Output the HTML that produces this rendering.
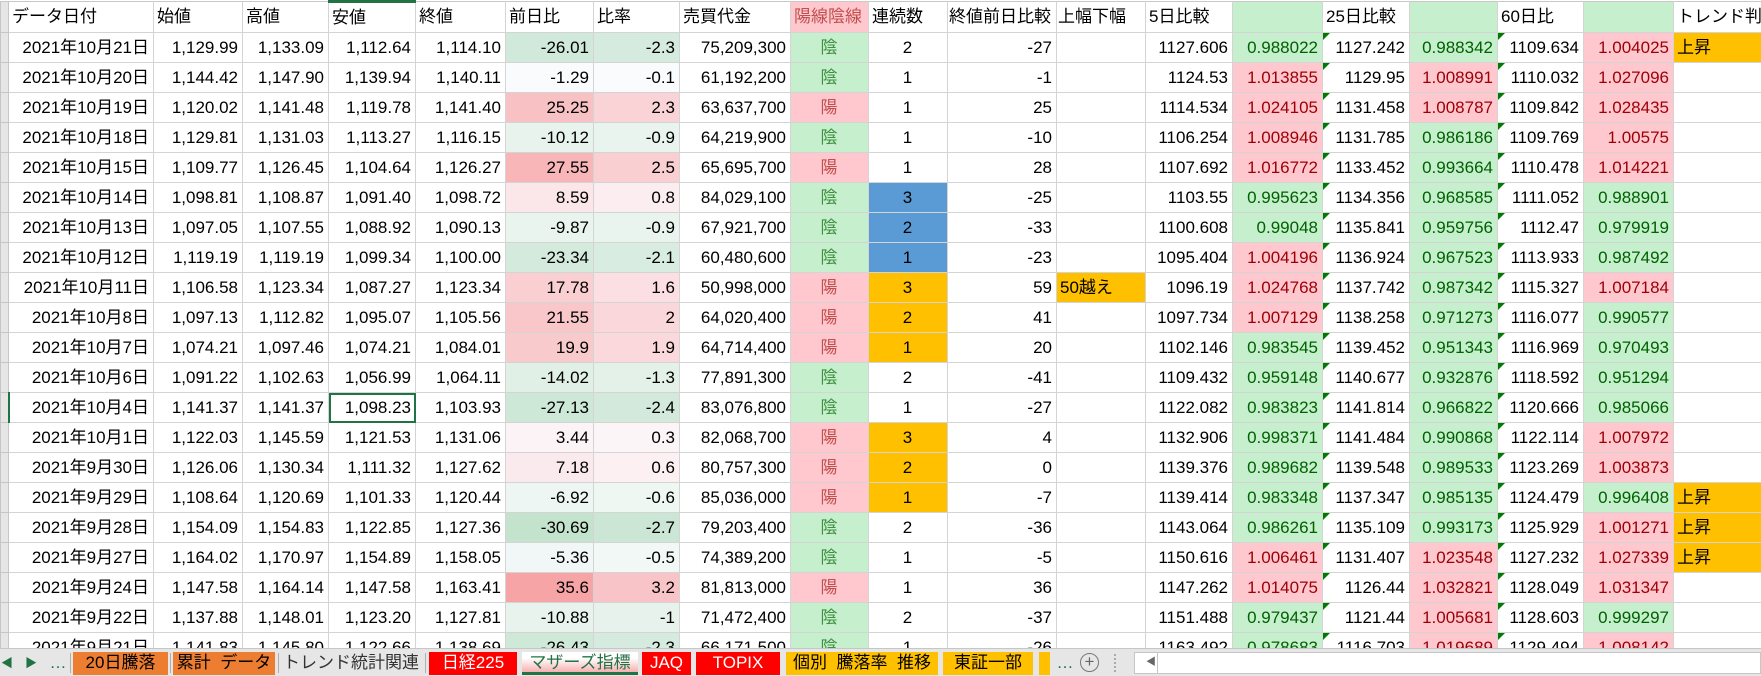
<!DOCTYPE html>
<html><head><meta charset="utf-8"><style>
*{margin:0;padding:0;box-sizing:border-box}
body{width:1761px;height:676px;overflow:hidden;background:#fff;font-family:"Liberation Sans","Noto Sans CJK JP",sans-serif;font-size:17px;color:#000;position:relative}
#grid{position:absolute;left:0;top:0;width:1761px;height:648px;overflow:hidden}
table{border-collapse:collapse;table-layout:fixed;width:1761px}
td{border:1px solid #d4d4d4;height:30px;padding:0 4px 0 3px;white-space:nowrap;overflow:hidden;text-align:right;position:relative;line-height:28px}
tr.h td{height:31px;text-align:left;border-top:1px solid #c8c8c8}
td.rh{background:#e6e6e6;padding:0;border-color:#c6c6c6}
.c{text-align:center}
.l{text-align:left}
.y{background:#ffc7ce;color:#c0504d}
.n{background:#c6efce;color:#3f8f3f}
.gr{background:#c6efce;color:#006100}
.rd{background:#ffc7ce;color:#9c0006}
.bl{background:#5b9bd5}
.or{background:#ffc000}
.t:before{content:"";position:absolute;left:0;top:0;border-top:7px solid #007a00;border-right:7px solid transparent}
#tabs{position:absolute;left:0;top:648px;width:1761px;height:28px;background:#e6e6e6;border-top:1px solid #c6c6c6}
.tab{position:absolute;top:3px;height:23px;line-height:22px;text-align:center;font-size:17px;white-space:nowrap;overflow:hidden}
.sep{position:absolute;top:4px;width:1px;height:20px;background:#b0b0b0}
</style></head><body>
<div id="grid"><table>
<colgroup><col style="width:8px"><col style="width:145px"><col style="width:89px"><col style="width:86px"><col style="width:87px"><col style="width:90px"><col style="width:88px"><col style="width:86px"><col style="width:111px"><col style="width:78px"><col style="width:79px"><col style="width:109px"><col style="width:89px"><col style="width:87px"><col style="width:90px"><col style="width:87px"><col style="width:88px"><col style="width:86px"><col style="width:90px"><col style="width:88px"></colgroup>
<tr class="h"><td class="rh"></td><td>データ日付</td><td>始値</td><td>高値</td><td style="border-top:3px solid #217346">安値</td><td>終値</td><td>前日比</td><td>比率</td><td>売買代金</td><td class="y">陽線陰線</td><td>連続数</td><td style="padding-left:1px">終値前日比較</td><td style="padding-left:1px">上幅下幅</td><td>5日比較</td><td class="gr"></td><td>25日比較</td><td class="gr"></td><td>60日比</td><td class="gr"></td><td>トレンド判</td></tr>
<tr><td class="rh"></td><td>2021年10月21日</td><td>1,129.99</td><td>1,133.09</td><td>1,112.64</td><td>1,114.10</td><td style="background:#d0e9da">-26.01</td><td style="background:#d5ebdf">-2.3</td><td>75,209,300</td><td class="c n">陰</td><td class="c">2</td><td>-27</td><td></td><td>1127.606</td><td class="gr">0.988022</td><td class="t">1127.242</td><td class="gr">0.988342</td><td class="t">1109.634</td><td class="rd">1.004025</td><td class="l or">上昇</td></tr>
<tr><td class="rh"></td><td>2021年10月20日</td><td>1,144.42</td><td>1,147.90</td><td>1,139.94</td><td>1,140.11</td><td style="background:#f9fbfd">-1.29</td><td style="background:#f9fbfd">-0.1</td><td>61,192,200</td><td class="c n">陰</td><td class="c">1</td><td>-1</td><td></td><td>1124.53</td><td class="rd">1.013855</td><td class="t">1129.95</td><td class="rd">1.008991</td><td class="t">1110.032</td><td class="rd">1.027096</td><td></td></tr>
<tr><td class="rh"></td><td>2021年10月19日</td><td>1,120.02</td><td>1,141.48</td><td>1,119.78</td><td>1,141.40</td><td style="background:#f8c2c4">25.25</td><td style="background:#f9d3d6">2.3</td><td>63,637,700</td><td class="c y">陽</td><td class="c">1</td><td>25</td><td></td><td>1114.534</td><td class="rd">1.024105</td><td class="t">1131.458</td><td class="rd">1.008787</td><td class="t">1109.842</td><td class="rd">1.028435</td><td></td></tr>
<tr><td class="rh"></td><td>2021年10月18日</td><td>1,129.81</td><td>1,131.03</td><td>1,113.27</td><td>1,116.15</td><td style="background:#e8f3ed">-10.12</td><td style="background:#eaf4ef">-0.9</td><td>64,219,900</td><td class="c n">陰</td><td class="c">1</td><td>-10</td><td></td><td>1106.254</td><td class="rd">1.008946</td><td class="t">1131.785</td><td class="gr">0.986186</td><td class="t">1109.769</td><td class="rd">1.00575</td><td></td></tr>
<tr><td class="rh"></td><td>2021年10月15日</td><td>1,109.77</td><td>1,126.45</td><td>1,104.64</td><td>1,126.27</td><td style="background:#f8b6b8">27.55</td><td style="background:#f9cfd2">2.5</td><td>65,695,700</td><td class="c y">陽</td><td class="c">1</td><td>28</td><td></td><td>1107.692</td><td class="rd">1.016772</td><td class="t">1133.452</td><td class="gr">0.993664</td><td class="t">1110.478</td><td class="rd">1.014221</td><td></td></tr>
<tr><td class="rh"></td><td>2021年10月14日</td><td>1,098.81</td><td>1,108.87</td><td>1,091.40</td><td>1,098.72</td><td style="background:#fbe6e9">8.59</td><td style="background:#fcedf0">0.8</td><td>84,029,100</td><td class="c n">陰</td><td class="c bl">3</td><td>-25</td><td></td><td>1103.55</td><td class="gr">0.995623</td><td class="t">1134.356</td><td class="gr">0.968585</td><td class="t">1111.052</td><td class="gr">0.988901</td><td></td></tr>
<tr><td class="rh"></td><td>2021年10月13日</td><td>1,097.05</td><td>1,107.55</td><td>1,088.92</td><td>1,090.13</td><td style="background:#e9f4ee">-9.87</td><td style="background:#eaf4ef">-0.9</td><td>67,921,700</td><td class="c n">陰</td><td class="c bl">2</td><td>-33</td><td></td><td>1100.608</td><td class="gr">0.99048</td><td class="t">1135.841</td><td class="gr">0.959756</td><td class="t">1112.47</td><td class="gr">0.979919</td><td></td></tr>
<tr><td class="rh"></td><td>2021年10月12日</td><td>1,119.19</td><td>1,119.19</td><td>1,099.34</td><td>1,100.00</td><td style="background:#d3eadc">-23.34</td><td style="background:#d8ece1">-2.1</td><td>60,480,600</td><td class="c n">陰</td><td class="c bl">1</td><td>-23</td><td></td><td>1095.404</td><td class="rd">1.004196</td><td class="t">1136.924</td><td class="gr">0.967523</td><td class="t">1113.933</td><td class="gr">0.987492</td><td></td></tr>
<tr><td class="rh"></td><td>2021年10月11日</td><td>1,106.58</td><td>1,123.34</td><td>1,087.27</td><td>1,123.34</td><td style="background:#facfd1">17.78</td><td style="background:#fbdfe2">1.6</td><td>50,998,000</td><td class="c y">陽</td><td class="c or">3</td><td>59</td><td class="l or">50越え</td><td>1096.19</td><td class="rd">1.024768</td><td class="t">1137.742</td><td class="gr">0.987342</td><td class="t">1115.327</td><td class="rd">1.007184</td><td></td></tr>
<tr><td class="rh"></td><td>2021年10月8日</td><td>1,097.13</td><td>1,112.82</td><td>1,095.07</td><td>1,105.56</td><td style="background:#f9c7c9">21.55</td><td style="background:#fad7da">2</td><td>64,020,400</td><td class="c y">陽</td><td class="c or">2</td><td>41</td><td></td><td>1097.734</td><td class="rd">1.007129</td><td class="t">1138.258</td><td class="gr">0.971273</td><td class="t">1116.077</td><td class="gr">0.990577</td><td></td></tr>
<tr><td class="rh"></td><td>2021年10月7日</td><td>1,074.21</td><td>1,097.46</td><td>1,074.21</td><td>1,084.01</td><td style="background:#f9cacc">19.9</td><td style="background:#fad8db">1.9</td><td>64,714,400</td><td class="c y">陽</td><td class="c or">1</td><td>20</td><td></td><td>1102.146</td><td class="gr">0.983545</td><td class="t">1139.452</td><td class="gr">0.951343</td><td class="t">1116.969</td><td class="gr">0.970493</td><td></td></tr>
<tr><td class="rh"></td><td>2021年10月6日</td><td>1,091.22</td><td>1,102.63</td><td>1,056.99</td><td>1,064.11</td><td style="background:#e1f0e6">-14.02</td><td style="background:#e3f1e8">-1.3</td><td>77,891,300</td><td class="c n">陰</td><td class="c">2</td><td>-41</td><td></td><td>1109.432</td><td class="gr">0.959148</td><td class="t">1140.677</td><td class="gr">0.932876</td><td class="t">1118.592</td><td class="gr">0.951294</td><td></td></tr>
<tr><td class="rh" style="border-right:2px solid #217346"></td><td>2021年10月4日</td><td>1,141.37</td><td>1,141.37</td><td style="outline:2px solid #217346;outline-offset:-2px">1,098.23</td><td>1,103.93</td><td style="background:#cde8d7">-27.13</td><td style="background:#d2e9dc">-2.4</td><td>83,076,800</td><td class="c n">陰</td><td class="c">1</td><td>-27</td><td></td><td>1122.082</td><td class="gr">0.983823</td><td class="t">1141.814</td><td class="gr">0.966822</td><td class="t">1120.666</td><td class="gr">0.985066</td><td></td></tr>
<tr><td class="rh"></td><td>2021年10月1日</td><td>1,122.03</td><td>1,145.59</td><td>1,121.53</td><td>1,131.06</td><td style="background:#fcf3f6">3.44</td><td style="background:#fcf5f7">0.3</td><td>82,068,700</td><td class="c y">陽</td><td class="c or">3</td><td>4</td><td></td><td>1132.906</td><td class="gr">0.998371</td><td class="t">1141.484</td><td class="gr">0.990868</td><td class="t">1122.114</td><td class="rd">1.007972</td><td></td></tr>
<tr><td class="rh"></td><td>2021年9月30日</td><td>1,126.06</td><td>1,130.34</td><td>1,111.32</td><td>1,127.62</td><td style="background:#fbeaed">7.18</td><td style="background:#fcf0f2">0.6</td><td>80,757,300</td><td class="c y">陽</td><td class="c or">2</td><td>0</td><td></td><td>1139.376</td><td class="gr">0.989682</td><td class="t">1139.548</td><td class="gr">0.989533</td><td class="t">1123.269</td><td class="rd">1.003873</td><td></td></tr>
<tr><td class="rh"></td><td>2021年9月29日</td><td>1,108.64</td><td>1,120.69</td><td>1,101.33</td><td>1,120.44</td><td style="background:#eef6f3">-6.92</td><td style="background:#eff7f3">-0.6</td><td>85,036,000</td><td class="c y">陽</td><td class="c or">1</td><td>-7</td><td></td><td>1139.414</td><td class="gr">0.983348</td><td class="t">1137.347</td><td class="gr">0.985135</td><td class="t">1124.479</td><td class="gr">0.996408</td><td class="l or">上昇</td></tr>
<tr><td class="rh"></td><td>2021年9月28日</td><td>1,154.09</td><td>1,154.83</td><td>1,122.85</td><td>1,127.36</td><td style="background:#c4e3cd">-30.69</td><td style="background:#cbe6d5">-2.7</td><td>79,203,400</td><td class="c n">陰</td><td class="c">2</td><td>-36</td><td></td><td>1143.064</td><td class="gr">0.986261</td><td class="t">1135.109</td><td class="gr">0.993173</td><td class="t">1125.929</td><td class="rd">1.001271</td><td class="l or">上昇</td></tr>
<tr><td class="rh"></td><td>2021年9月27日</td><td>1,164.02</td><td>1,170.97</td><td>1,154.89</td><td>1,158.05</td><td style="background:#f1f7f6">-5.36</td><td style="background:#f1f8f5">-0.5</td><td>74,389,200</td><td class="c n">陰</td><td class="c">1</td><td>-5</td><td></td><td>1150.616</td><td class="rd">1.006461</td><td class="t">1131.407</td><td class="rd">1.023548</td><td class="t">1127.232</td><td class="rd">1.027339</td><td class="l or">上昇</td></tr>
<tr><td class="rh"></td><td>2021年9月24日</td><td>1,147.58</td><td>1,164.14</td><td>1,147.58</td><td>1,163.41</td><td style="background:#f7a4a6">35.6</td><td style="background:#f8c4c7">3.2</td><td>81,813,000</td><td class="c y">陽</td><td class="c">1</td><td>36</td><td></td><td>1147.262</td><td class="rd">1.014075</td><td class="t">1126.44</td><td class="rd">1.032821</td><td class="t">1128.049</td><td class="rd">1.031347</td><td></td></tr>
<tr><td class="rh"></td><td>2021年9月22日</td><td>1,137.88</td><td>1,148.01</td><td>1,123.20</td><td>1,127.81</td><td style="background:#e7f3ec">-10.88</td><td style="background:#e7f2ec">-1</td><td>71,472,400</td><td class="c n">陰</td><td class="c">2</td><td>-37</td><td></td><td>1151.488</td><td class="gr">0.979437</td><td class="t">1121.44</td><td class="rd">1.005681</td><td class="t">1128.603</td><td class="gr">0.999297</td><td></td></tr>
<tr><td class="rh"></td><td>2021年9月21日</td><td>1,141.83</td><td>1,145.80</td><td>1,122.66</td><td>1,138.69</td><td style="background:#cfe9d9">-26.43</td><td style="background:#d5ebdf">-2.3</td><td>66,171,500</td><td class="c n">陰</td><td class="c">1</td><td>-26</td><td></td><td>1163.492</td><td class="gr">0.978683</td><td class="t">1116.703</td><td class="rd">1.019689</td><td class="t">1129.494</td><td class="rd">1.008142</td><td></td></tr>
</table></div>
<div id="tabs">
<div class="tab" style="left:0;width:14px;color:#217346;font-size:12px">◀</div>
<div class="tab" style="left:24px;width:14px;color:#217346;font-size:12px">▶</div>
<div class="tab" style="left:48px;width:20px;color:#217346">…</div>
<div class="sep" style="left:70px"></div>
<div class="tab" style="left:73px;width:95px;background:#ed7d31">20日騰落</div>
<div class="sep" style="left:170px"></div>
<div class="tab" style="left:173px;width:102px;background:#ed7d31">累計&nbsp; データ</div>
<div class="sep" style="left:278px"></div>
<div class="tab" style="left:281px;width:140px;color:#333">トレンド統計関連</div>
<div class="sep" style="left:425px"></div>
<div class="tab" style="left:429px;width:88px;background:#ff0000;color:#fff">日経225</div>
<div class="tab" style="left:522px;width:116px;background:linear-gradient(#fff 30%,#f7b0b0);color:#217346;border-bottom:3px solid #217346">マザーズ指標</div>
<div class="tab" style="left:642px;width:49px;background:#ff0000;color:#fff">JAQ</div>
<div class="tab" style="left:696px;width:84px;background:#ff0000;color:#fff">TOPIX</div>
<div class="tab" style="left:786px;width:152px;background:#ffc000">個別&nbsp; 騰落率&nbsp; 推移</div>
<div class="tab" style="left:943px;width:90px;background:#ffc000">東証一部</div>
<div class="tab" style="left:1039px;width:11px;background:#ffc000"></div>
<div class="tab" style="left:1055px;width:20px;color:#217346">…</div>
<div style="position:absolute;left:1080px;top:4px;width:19px;height:19px;border:1px solid #777;border-radius:50%;text-align:center;line-height:16px;color:#666;font-size:17px">+</div>
<div style="position:absolute;left:1114px;top:5px;width:2px;height:18px;border-left:2px dotted #aaa"></div>
<div style="position:absolute;left:1134px;top:3px;width:627px;height:22px;background:#fff;border:1px solid #c6c6c6"></div>
<div style="position:absolute;left:1146px;top:3px;width:12px;height:22px;border-right:1px solid #c6c6c6;color:#666;font-size:10px;line-height:22px">◀</div>
</div>
</body></html>
